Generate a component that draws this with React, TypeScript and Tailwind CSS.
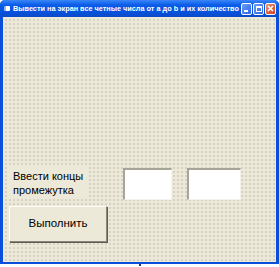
import React from "react";

const TitleButton = ({ kind }: { kind: "min" | "max" | "close" }) => {
    const base =
        kind === "close"
            ? "bg-[linear-gradient(135deg,#ec9272,#d1401c)]"
            : "bg-[linear-gradient(135deg,#6a9ef7,#2a63e8)]"
    return (
        <div className={`w-[11px] h-[12px] rounded-[2px] border border-white flex items-center justify-center ${base}`}>
            {kind === "min" && <div className="w-[4px] h-[2px] bg-white mt-[4px] -ml-[2px]" />}
            {kind === "max" && <div className="w-[6px] h-[6px] border border-white border-t-2" />}
            {kind === "close" && (
                <svg width="7" height="7" viewBox="0 0 7 7">
                    <path d="M1 1L6 6M6 1L1 6" stroke="white" strokeWidth="1.6" />
                </svg>
            )}
        </div>
    )
}

const App = () => {
    return (
        <div className="w-[279px] h-[267px] bg-white flex flex-col" style={{ fontFamily: "'Liberation Sans', Arial, sans-serif" }}>
            <div className="w-[279px] h-[264px] flex flex-col bg-[#0a4fdc] rounded-t-[5px] px-[3px] pb-[2px]">
                {/* title bar */}
                <div className="h-[17px] -mx-[3px] px-[3px] rounded-t-[5px] flex items-center bg-[linear-gradient(180deg,#3a86f7_0%,#0a5ce8_30%,#0652dd_70%,#0a4ac9_100%)]">
                    <div className="w-[6px] h-[5px] bg-white ml-[1px] rounded-[1px] border-l-2 border-[#8fb6f5]" />
                    <span className="ml-[3px] text-white font-bold text-[7.3px] leading-none whitespace-nowrap">
                        Вывести на экран все четные числа от a до b и их количество
                    </span>
                    <div className="ml-auto flex gap-[1px]">
                        <TitleButton kind="min" />
                        <TitleButton kind="max" />
                        <TitleButton kind="close" />
                    </div>
                </div>
                {/* form body */}
                <div className="flex-1 bg-[#ece9d8] bg-[radial-gradient(circle,#bcb9ac_0.6px,transparent_0.8px)] bg-[size:4px_4px] bg-[position:1px_1px] pt-[148px]">
                    <div className="flex items-start">
                        <div className="ml-[6px] w-[80px] h-[34px] bg-[#ece9d8] pl-[4px] pt-[4px] text-[11px] leading-[14px] text-black">
                            Ввести концы
                            <br />
                            промежутка
                        </div>
                        <div className="ml-[34px] mt-[3px] w-[49px] h-[32px] bg-white border-t-2 border-l-2 border-[#a7a598] border-r border-b border-r-[#f4f3ee] border-b-[#f4f3ee]" />
                        <div className="ml-[15px] mt-[3px] w-[54px] h-[32px] bg-white border-t-2 border-l-2 border-[#a7a598] border-r border-b border-r-[#f4f3ee] border-b-[#f4f3ee]" />
                    </div>
                    <div className="ml-[6px] mt-[6px] w-[98px] h-[36px] bg-[#ece9d8] border border-t-white border-l-white border-r-[#8a877c] border-b-[#8a877c] shadow-[1px_1px_0_#5d5b52] flex items-center justify-center text-[11.5px] text-black">
                        Выполнить
                    </div>
                </div>
            </div>
            <div className="w-[2px] h-[2px] bg-[#1d3a8a] ml-[139px]" />
        </div>
    )
}

export default App
